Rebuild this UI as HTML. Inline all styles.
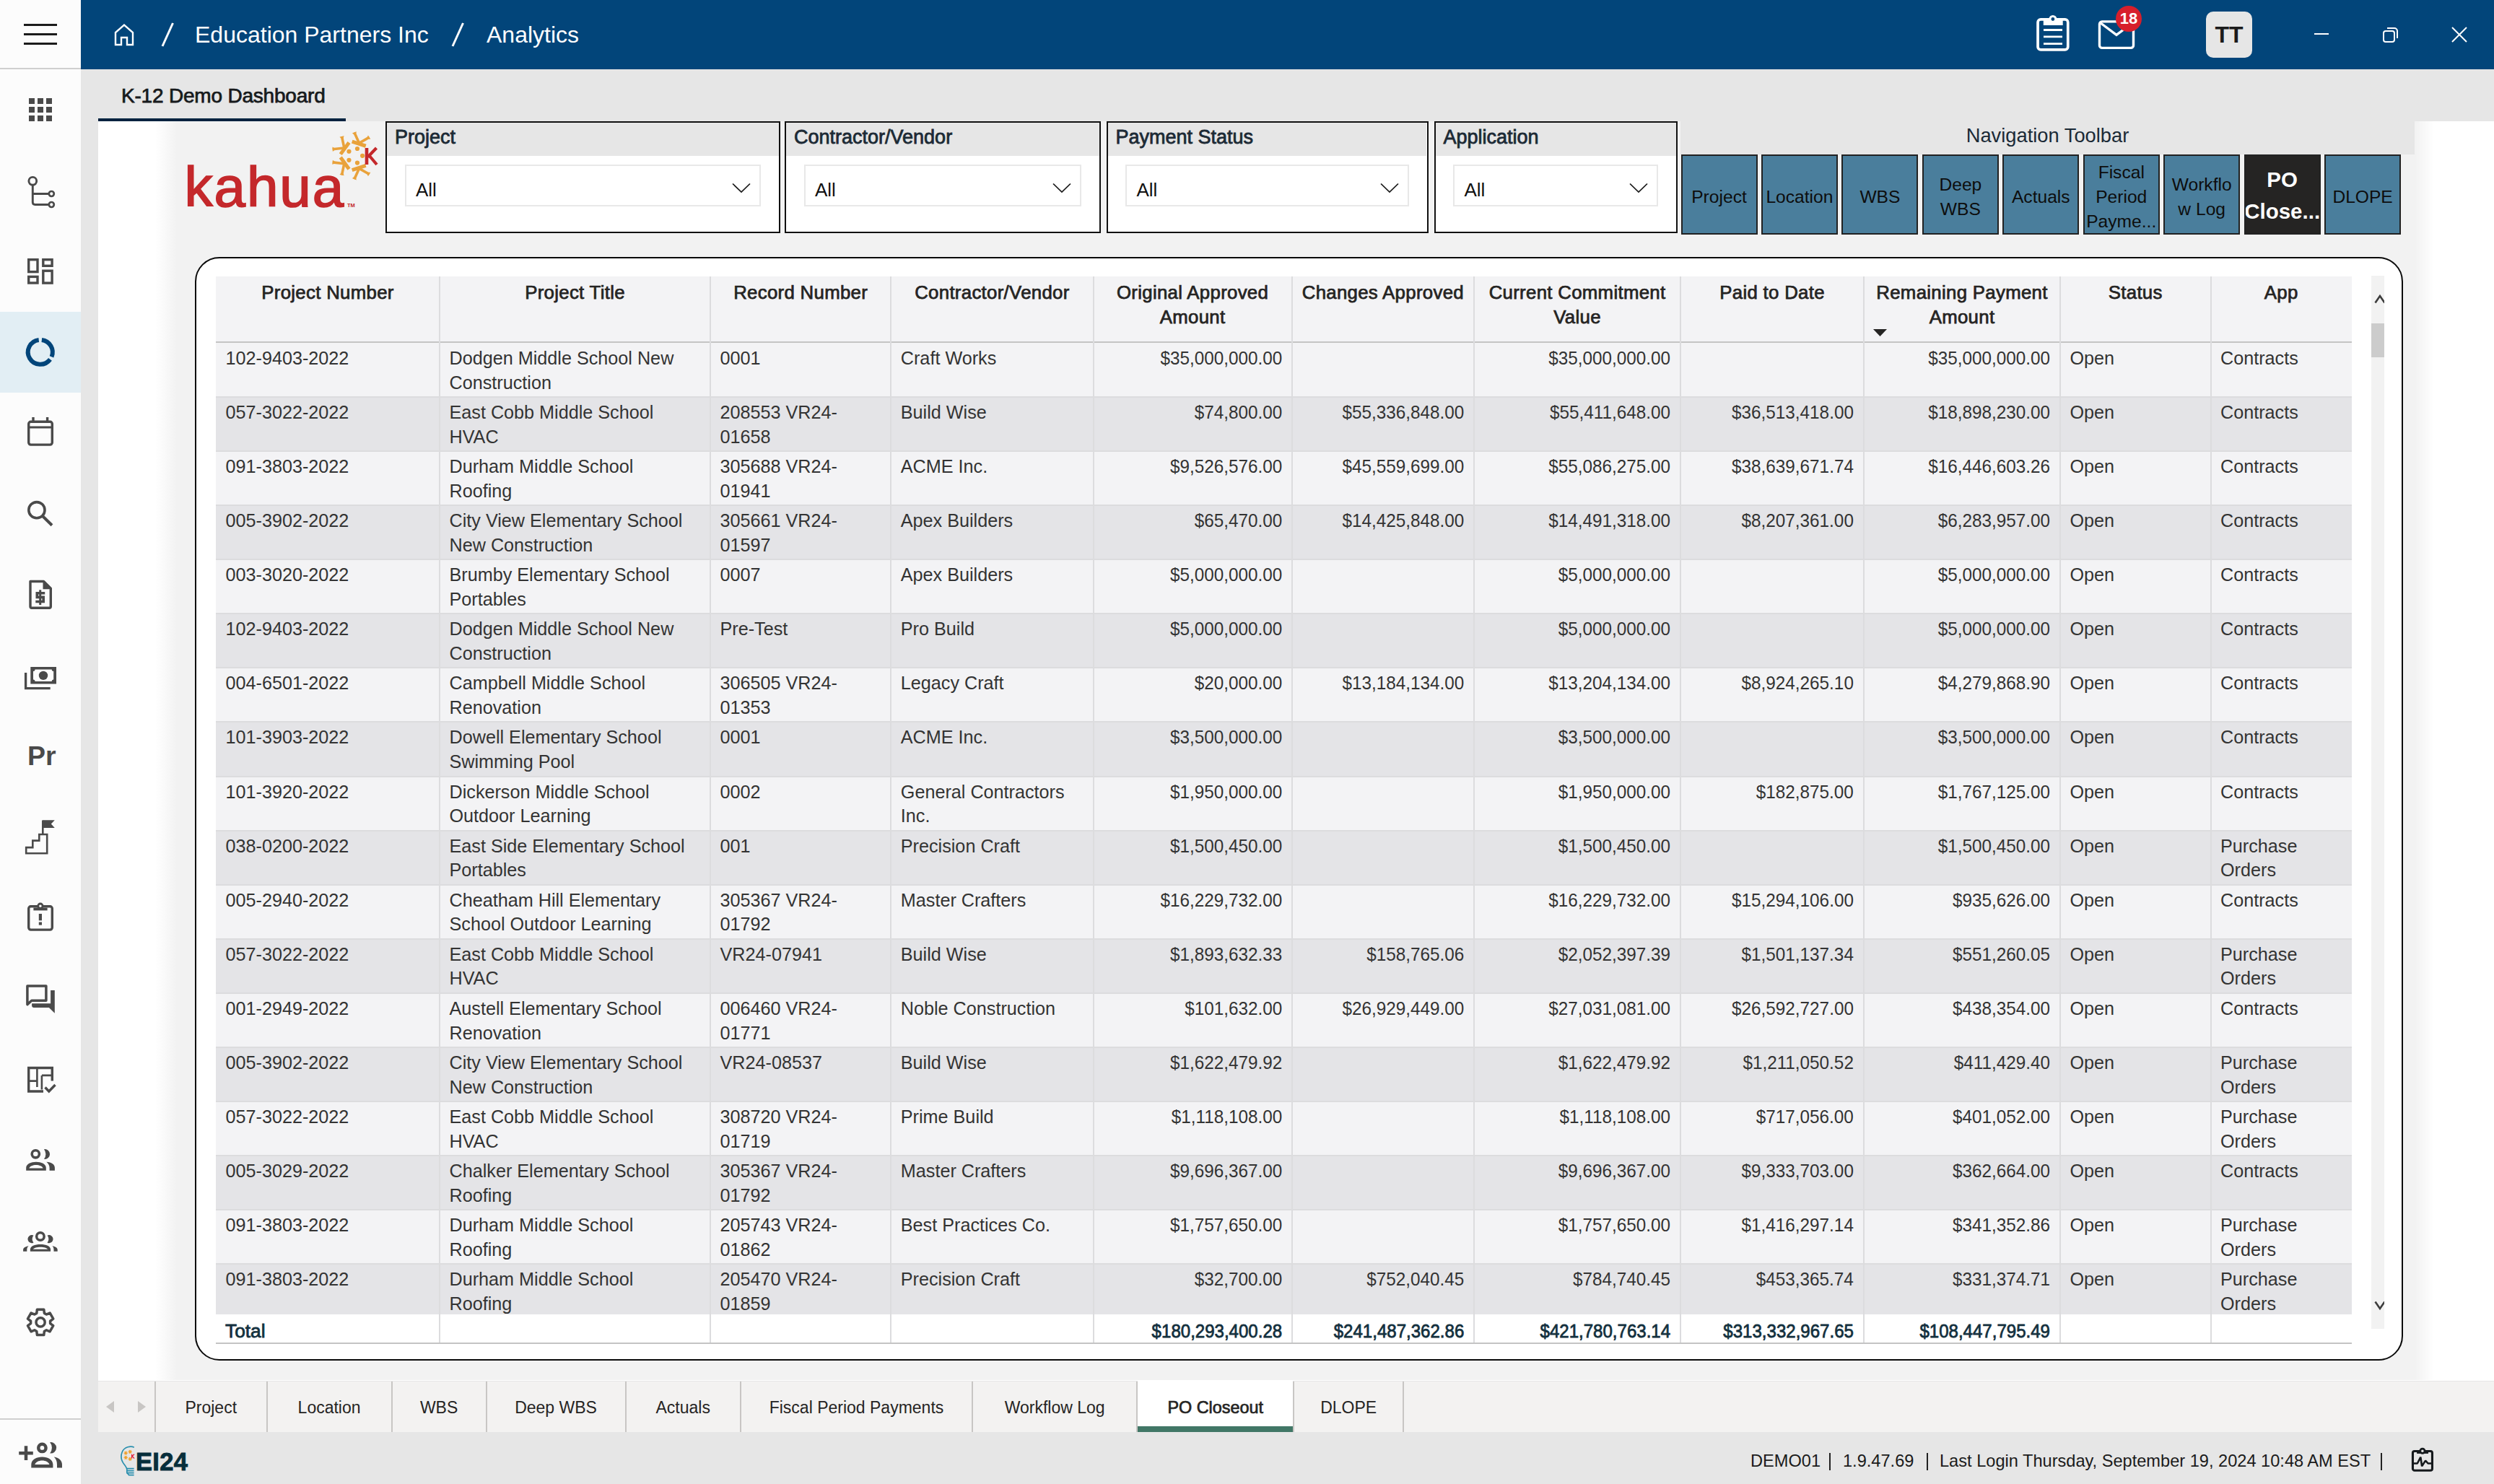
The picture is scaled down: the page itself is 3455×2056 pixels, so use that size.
<!DOCTYPE html>
<html><head><meta charset="utf-8"><title>Analytics</title><style>
html,body{margin:0;padding:0;width:3455px;height:2056px;overflow:hidden;background:#e6e6e6;font-family:'Liberation Sans', sans-serif;}
.a{position:absolute;}
.bc{font:32px/42px 'Liberation Sans', sans-serif;color:#fff;white-space:nowrap;}
.th{font:25.8px/34px 'Liberation Sans', sans-serif;color:#252423;text-align:center;-webkit-text-stroke:0.75px #252423;letter-spacing:0.3px;}
.td{font:25.2px/33.7px 'Liberation Sans', sans-serif;color:#333333;white-space:nowrap;}
.td.r{text-align:right;font-size:25.3px;transform:scaleX(0.96);transform-origin:100% 50%;}
.tt.r{text-align:right;font-size:26px;transform:scaleX(0.925);transform-origin:100% 50%;}
.tt{font:26.3px/34px 'Liberation Sans', sans-serif;color:#13303e;white-space:nowrap;-webkit-text-stroke:0.8px #13303e;}
.sl{font:27px/34px 'Liberation Sans', sans-serif;color:#1c2a35;white-space:nowrap;-webkit-text-stroke:0.8px #1c2a35;}
.all{font:26px/34px 'Liberation Sans', sans-serif;color:#111;}
.nb,.nbd{box-sizing:border-box;border:2.2px solid #222;display:flex;align-items:center;justify-content:center;text-align:center;overflow:hidden;}
.nb span{font:24.6px/34px 'Liberation Sans', sans-serif;padding-top:7px;}
.nbd span{font:bold 29.5px/44px 'Liberation Sans', sans-serif;padding-top:3px;}
.tb{font:23px/32px 'Liberation Sans', sans-serif;color:#252423;text-align:center;white-space:nowrap;}
.tb.b{font-size:23.4px;-webkit-text-stroke:0.7px #252423;}
.ft{font:23.6px/30px 'Liberation Sans', sans-serif;color:#1b1b1b;white-space:nowrap;}
</style></head><body>
<div class="a " style="left:0px;top:0px;width:112px;height:2056px;background:#fcfcfc;"></div>
<div class="a " style="left:0px;top:94px;width:112px;height:2px;background:#cfcfcf;"></div>
<div class="a " style="left:0px;top:1965px;width:112px;height:2px;background:#cfcfcf;"></div>
<div class="a " style="left:0px;top:432px;width:112px;height:112px;background:#e2eef4;"></div>
<div class="a " style="left:112px;top:0px;width:3343px;height:96px;background:#02457a;"></div>
<div class="a " style="left:112px;top:96px;width:3343px;height:1960px;background:#e6e6e6;"></div>
<div class="a " style="left:136px;top:168px;width:3319px;height:1745px;background:#ffffff;"></div>
<div class="a " style="left:215px;top:168px;width:3165px;height:1744px;background:linear-gradient(90deg,#ffffff 0px,#f2f2f2 30px,#f2f2f2 3131px,#ffffff 3157px);"></div>
<div class="a " style="left:136px;top:164px;width:343px;height:4px;background:#00223f;"></div>
<div class="a " style="left:33px;top:33px;width:46px;height:2.6px;background:#1b1b1b;"></div>
<div class="a " style="left:33px;top:46px;width:46px;height:2.6px;background:#1b1b1b;"></div>
<div class="a " style="left:33px;top:59px;width:46px;height:2.6px;background:#1b1b1b;"></div>
<svg class="a" style="left:157px;top:32px" width="30" height="32" viewBox="0 0 30 32"><path d="M3 30V13L15 2.5L27 13V30H19V20H11V30Z" fill="none" stroke="#fff" stroke-width="2.4" stroke-linejoin="miter"/></svg>
<svg class="a" style="left:222px;top:31px" width="20" height="34"><path d="M17.5 1L3 33" stroke="#fff" stroke-width="3"/></svg>
<svg class="a" style="left:624px;top:31px" width="20" height="34"><path d="M17.5 1L3 33" stroke="#fff" stroke-width="3"/></svg>
<div class="a bc" style="left:270px;top:27px;">Education Partners Inc</div>
<div class="a bc" style="left:674px;top:27px;">Analytics</div>
<svg class="a" style="left:2819px;top:19px" width="50" height="54" viewBox="0 0 50 54"><rect x="4.05" y="7.95" width="41.7" height="42" rx="4" fill="none" stroke="#fff" stroke-width="3.7"/><rect x="11.8" y="6.4" width="26.9" height="9.6" fill="#fff"/><circle cx="24.9" cy="7.5" r="5.5" fill="#fff"/><circle cx="24.9" cy="7.5" r="2.4" fill="#02457a"/><path d="M12 22.5H38M12 31.8H38M12 41.6H38" stroke="#fff" stroke-width="2.8"/></svg>
<svg class="a" style="left:2905px;top:26px" width="54" height="44" viewBox="0 0 54 44"><rect x="3.5" y="3.9" width="47" height="36.5" rx="3.5" fill="none" stroke="#fff" stroke-width="3.4"/><path d="M4.5 5.5L27 22.3L49.5 5.5" fill="none" stroke="#fff" stroke-width="3.4"/></svg>
<div class="a" style="left:2930.8px;top:7.8px;width:36.4px;height:36.4px;border-radius:50%;background:#d71f2c;color:#fff;font:bold 22px/36.4px 'Liberation Sans', sans-serif;text-align:center;">18</div>
<div class="a" style="left:3056px;top:16px;width:64px;height:64px;border-radius:10px;background:#e6e6e6;color:#1b1b1b;font:bold 32px/64px 'Liberation Sans', sans-serif;text-align:center;">TT</div>
<div class="a " style="left:3206px;top:46px;width:20px;height:2px;background:#fff;"></div>
<svg class="a" style="left:3300px;top:36px" width="24" height="24"><rect x="2" y="7" width="15" height="15" rx="3" fill="none" stroke="#fff" stroke-width="2"/><path d="M7 3H17a4 4 0 0 1 4 4V17" fill="none" stroke="#fff" stroke-width="2"/></svg>
<svg class="a" style="left:3395px;top:36px" width="24" height="24"><path d="M2 2L22 22M22 2L2 22" stroke="#fff" stroke-width="2"/></svg>
<div class="a" style="left:168px;top:115px;font:28px/36px 'Liberation Sans', sans-serif;color:#171a1c;-webkit-text-stroke:0.75px #171a1c;letter-spacing:-0.2px;">K-12 Demo Dashboard</div>
<svg class="a" style="left:32.0px;top:128.0px;overflow:visible" width="48" height="48" viewBox="0 0 48 48"><rect x="8" y="8" width="8" height="8" fill="#4a4a4a"/><rect x="20" y="8" width="8" height="8" fill="#4a4a4a"/><rect x="32" y="8" width="8" height="8" fill="#4a4a4a"/><rect x="8" y="20" width="8" height="8" fill="#4a4a4a"/><rect x="20" y="20" width="8" height="8" fill="#4a4a4a"/><rect x="32" y="20" width="8" height="8" fill="#4a4a4a"/><rect x="8" y="32" width="8" height="8" fill="#4a4a4a"/><rect x="20" y="32" width="8" height="8" fill="#4a4a4a"/><rect x="32" y="32" width="8" height="8" fill="#4a4a4a"/></svg>
<svg class="a" style="left:32.0px;top:240.0px;overflow:visible" width="48" height="48" viewBox="0 0 48 48"><circle cx="13.3" cy="10.8" r="5.4" fill="none" stroke="#4a4a4a" stroke-width="2.9"/><path d="M13.3 16.2V40.3Q13.3 43.5 16.5 43.5H35.8M13.3 28.5H35.8" fill="none" stroke="#4a4a4a" stroke-width="2.9"/><circle cx="39.3" cy="28.5" r="3.5" fill="none" stroke="#4a4a4a" stroke-width="2.7"/><circle cx="39.3" cy="43.5" r="3.5" fill="none" stroke="#4a4a4a" stroke-width="2.7"/></svg>
<svg class="a" style="left:32.0px;top:352.0px;overflow:visible" width="48" height="48" viewBox="0 0 48 48"><rect x="7.7" y="7.7" width="12.3" height="16.9" fill="none" stroke="#4a4a4a" stroke-width="3.4"/><rect x="27.8" y="7.7" width="12.3" height="8.6" fill="none" stroke="#4a4a4a" stroke-width="3.4"/><rect x="7.7" y="31.4" width="12.3" height="8.6" fill="none" stroke="#4a4a4a" stroke-width="3.4"/><rect x="27.8" y="23.2" width="12.3" height="16.9" fill="none" stroke="#4a4a4a" stroke-width="3.4"/></svg>
<svg class="a" style="left:32.0px;top:464.0px;overflow:visible" width="48" height="48" viewBox="0 0 48 48"><path d="M25.87 6.93A17 17 0 0 1 39.52 30.28" fill="none" stroke="#02457a" stroke-width="6"/><path d="M37.48 33.89A17 17 0 1 1 21.73 6.93" fill="none" stroke="#02457a" stroke-width="6"/></svg>
<svg class="a" style="left:32.0px;top:576.0px;overflow:visible" width="48" height="48" viewBox="0 0 48 48"><rect x="7.7" y="8.2" width="32.6" height="31.9" rx="3" fill="none" stroke="#4a4a4a" stroke-width="3.4"/><path d="M7.7 16H40.3" stroke="#4a4a4a" stroke-width="3"/><path d="M14 2V8M33.6 2V8" stroke="#4a4a4a" stroke-width="3.4"/></svg>
<svg class="a" style="left:32.0px;top:688.0px;overflow:visible" width="48" height="48" viewBox="0 0 48 48"><circle cx="18.9" cy="18.7" r="11.1" fill="none" stroke="#4a4a4a" stroke-width="3.6"/><path d="M26.5 26.5L40 39.7" stroke="#4a4a4a" stroke-width="4"/></svg>
<svg class="a" style="left:32.0px;top:800.0px;overflow:visible" width="48" height="48" viewBox="0 0 48 48"><path d="M10 5.5H28.5L38.3 15.3V40.2a2 2 0 0 1-2 2H12a2 2 0 0 1-2-2Z" fill="none" stroke="#4a4a4a" stroke-width="3.4" stroke-linejoin="round"/><path d="M27.5 4.5V16.3H39.3Z" fill="#4a4a4a"/><path d="M23.7 17.3V38" stroke="#4a4a4a" stroke-width="3"/><path d="M30.2 21.7H19.3V27.4H28.2V33.5H17.3" fill="none" stroke="#4a4a4a" stroke-width="3.6"/></svg>
<svg class="a" style="left:32.0px;top:912.0px;overflow:visible" width="48" height="48" viewBox="0 0 48 48"><path d="M10.3 12H46V35.4H10.3Z M16.5 15.5A2.5 2.5 0 0 1 14 18V29.5A2.5 2.5 0 0 1 16.5 32H39.7A2.5 2.5 0 0 1 42.2 29.5V18A2.5 2.5 0 0 1 39.7 15.5Z" fill="#4a4a4a" fill-rule="evenodd"/><circle cx="28" cy="23.9" r="6.2" fill="#4a4a4a"/><path d="M3.6 20V41.7H37.7" fill="none" stroke="#4a4a4a" stroke-width="3.3"/></svg>
<div class="a" style="left:38px;top:1026px;font:bold 37.5px/42px 'Liberation Sans', sans-serif;color:#4a4a4a;">Pr</div>
<svg class="a" style="left:32.0px;top:1136.0px;overflow:visible" width="48" height="48" viewBox="0 0 48 48"><path d="M4.2 46.2V38.1H13.3V28.6H22.3V20H33.2V46.2Z" fill="none" stroke="#4a4a4a" stroke-width="2.6"/><path d="M27.3 20V0.5" stroke="#4a4a4a" stroke-width="2.6"/><path d="M27.5 0.3H43.8L38.8 5.6L43.8 11H27.5Z" fill="#4a4a4a"/></svg>
<svg class="a" style="left:32.0px;top:1248.0px;overflow:visible" width="48" height="48" viewBox="0 0 48 48"><rect x="7.7" y="7.7" width="32.6" height="32.4" rx="3" fill="none" stroke="#4a4a4a" stroke-width="3.4"/><rect x="14.4" y="9.6" width="19.2" height="3.8" fill="#4a4a4a"/><circle cx="23.9" cy="7.2" r="3.2" fill="#fcfcfc" stroke="#4a4a4a" stroke-width="2.8"/><rect x="21.8" y="18" width="4.2" height="9.3" fill="#4a4a4a"/><rect x="21.8" y="29.5" width="4.2" height="4.1" fill="#4a4a4a"/></svg>
<svg class="a" style="left:32.0px;top:1360.0px;overflow:visible" width="48" height="48" viewBox="0 0 48 48"><path d="M5.9 5.9H31.9V26.3H11.8L5.9 31.6Z" fill="none" stroke="#4a4a4a" stroke-width="3.5" stroke-linejoin="round"/><path d="M38.1 12H43.8V43.8L35.9 35.9H14.5Q12.1 35.9 12.1 33.5V30.2H38.1Z" fill="#4a4a4a"/></svg>
<svg class="a" style="left:32.0px;top:1472.0px;overflow:visible" width="48" height="48" viewBox="0 0 48 48"><path d="M7.7 41.7V7.5H40.3V25.5M6 40H28" fill="none" stroke="#4a4a4a" stroke-width="3.4"/><path d="M19.4 7.5V34M7.7 25.6H20M25.9 17.9V37.5M25.9 17.9H39" fill="none" stroke="#4a4a4a" stroke-width="2.6"/><path d="M30.5 34.5L35.8 40L44.5 31" fill="none" stroke="#4a4a4a" stroke-width="3.4"/></svg>
<svg class="a" style="left:32.0px;top:1584.0px;overflow:visible" width="48" height="48" viewBox="0 0 48 48"><circle cx="17.3" cy="14.8" r="5.1" fill="none" stroke="#4a4a4a" stroke-width="3.6"/><path d="M29 8.2A6.9 6.9 0 1 1 29 21.8A11 11 0 0 0 29 8.2Z" fill="#4a4a4a"/><path d="M4.2 37.7V34C4.2 28.5 11 25.7 18 25.7C25 25.7 31.8 28.5 31.8 34V37.7Z M8.4 34.4C9.5 31.6 13.5 30 18 30C22.5 30 26.5 31.6 27.6 34.4Z" fill="#4a4a4a" fill-rule="evenodd"/><path d="M32.4 25.7C39.2 26.2 43.9 29 43.9 34V37.7H36.6V34C36.6 30.6 35 27.8 32.4 25.7Z" fill="#4a4a4a"/></svg>
<svg class="a" style="left:32.0px;top:1696.0px;overflow:visible" width="48" height="48" viewBox="0 0 48 48"><circle cx="23.9" cy="17" r="5.25" fill="none" stroke="#4a4a4a" stroke-width="3.5"/><path d="M14.4 15.5A5.6 5.6 0 1 0 14.4 25.7A9 9 0 0 1 14.4 15.5Z" fill="#4a4a4a"/><path d="M33.6 15.5A5.6 5.6 0 1 1 33.6 25.7A9 9 0 0 0 33.6 15.5Z" fill="#4a4a4a"/><path d="M9.9 37.7V35C9.9 30.5 16 28 24 28C32 28 38.1 30.5 38.1 35V37.7Z M14 34.8C15 32.8 19 31.8 24 31.8C29 31.8 33 32.8 34 34.8Z" fill="#4a4a4a" fill-rule="evenodd"/><path d="M7.6 30.2C3.5 31 0.1 32.5 0.1 35.5V37.7H5.3V35.5C5.3 33.2 6.1 31.6 7.6 30.2Z" fill="#4a4a4a"/><path d="M40.4 30.2C44.5 31 47.7 32.5 47.7 35.5V37.7H42.5V35.5C42.5 33.2 41.9 31.6 40.4 30.2Z" fill="#4a4a4a"/></svg>
<svg class="a" style="left:32.0px;top:1808.0px;overflow:visible" width="48" height="48" viewBox="0 0 48 48"><polygon points="19.40,6.22 28.80,6.22 29.40,11.37 32.30,13.05 37.06,10.98 41.77,19.13 37.60,22.22 37.60,25.58 41.77,28.67 37.06,36.82 32.30,34.75 29.40,36.43 28.80,41.58 19.40,41.58 18.80,36.43 15.90,34.75 11.14,36.82 6.43,28.67 10.60,25.58 10.60,22.22 6.43,19.13 11.14,10.98 15.90,13.05 18.80,11.37" fill="none" stroke="#4a4a4a" stroke-width="3.5" stroke-linejoin="round"/><circle cx="24.1" cy="23.9" r="6.1" fill="none" stroke="#4a4a4a" stroke-width="3.5"/></svg>
<svg class="a" style="left:24.0px;top:1984.0px;overflow:visible" width="64" height="64" viewBox="0 0 64 64"><path d="M2.2 29.2H21.8M12 19.2V39" stroke="#4a4a4a" stroke-width="4.5"/><circle cx="34.4" cy="21.9" r="5.15" fill="none" stroke="#4a4a4a" stroke-width="4.5"/><path d="M45.2 14.2A7.7 7.7 0 1 1 45.2 29.4A12 12 0 0 0 45.2 14.2Z" fill="#4a4a4a"/><path d="M19.3 49.4V45C19.3 38.5 26.5 34.5 34.4 34.5C42.3 34.5 49.4 38.5 49.4 45V49.4Z M24.3 44.9C25.5 41.5 29.5 39.4 34.4 39.4C39.3 39.4 43.3 41.5 44.5 44.9Z" fill="#4a4a4a" fill-rule="evenodd"/><path d="M50.7 34.5C57.5 35.5 62 39.5 62 45V49.4H55V45C55 40.5 53.5 37 50.7 34.5Z" fill="#4a4a4a"/></svg>
<div class="a " style="left:534px;top:168px;width:547px;height:155px;background:#fff;border:2.4px solid #111;box-sizing:border-box;"></div>
<div class="a " style="left:536.4px;top:170.4px;width:542.2px;height:46px;background:#e6e6e6;"></div>
<div class="a sl" style="left:547px;top:173px;">Project</div>
<div class="a " style="left:560.5px;top:228.3px;width:493.5px;height:58.2px;border:2.2px solid #e8e8e8;box-sizing:border-box;background:#fff;"></div>
<div class="a all" style="left:576px;top:246px;">All</div>
<svg class="a" style="left:1014px;top:252.5px" width="26" height="15"><path d="M1 1.5L13 13L25 1.5" fill="none" stroke="#1a1a1a" stroke-width="1.7"/></svg>
<div class="a " style="left:1087px;top:168px;width:438px;height:155px;background:#fff;border:2.4px solid #111;box-sizing:border-box;"></div>
<div class="a " style="left:1089.4px;top:170.4px;width:433.2px;height:46px;background:#e6e6e6;"></div>
<div class="a sl" style="left:1100px;top:173px;">Contractor/Vendor</div>
<div class="a " style="left:1113.5px;top:228.3px;width:384.5px;height:58.2px;border:2.2px solid #e8e8e8;box-sizing:border-box;background:#fff;"></div>
<div class="a all" style="left:1129px;top:246px;">All</div>
<svg class="a" style="left:1458px;top:252.5px" width="26" height="15"><path d="M1 1.5L13 13L25 1.5" fill="none" stroke="#1a1a1a" stroke-width="1.7"/></svg>
<div class="a " style="left:1532.5px;top:168px;width:446.0px;height:155px;background:#fff;border:2.4px solid #111;box-sizing:border-box;"></div>
<div class="a " style="left:1534.9px;top:170.4px;width:441.2px;height:46px;background:#e6e6e6;"></div>
<div class="a sl" style="left:1545.5px;top:173px;">Payment Status</div>
<div class="a " style="left:1559.0px;top:228.3px;width:392.5px;height:58.2px;border:2.2px solid #e8e8e8;box-sizing:border-box;background:#fff;"></div>
<div class="a all" style="left:1574.5px;top:246px;">All</div>
<svg class="a" style="left:1911.5px;top:252.5px" width="26" height="15"><path d="M1 1.5L13 13L25 1.5" fill="none" stroke="#1a1a1a" stroke-width="1.7"/></svg>
<div class="a " style="left:1986.5px;top:168px;width:337.5px;height:155px;background:#fff;border:2.4px solid #111;box-sizing:border-box;"></div>
<div class="a " style="left:1988.9px;top:170.4px;width:332.7px;height:46px;background:#e6e6e6;"></div>
<div class="a sl" style="left:1999.5px;top:173px;">Application</div>
<div class="a " style="left:2013.0px;top:228.3px;width:284.0px;height:58.2px;border:2.2px solid #e8e8e8;box-sizing:border-box;background:#fff;"></div>
<div class="a all" style="left:2028.5px;top:246px;">All</div>
<svg class="a" style="left:2257px;top:252.5px" width="26" height="15"><path d="M1 1.5L13 13L25 1.5" fill="none" stroke="#1a1a1a" stroke-width="1.7"/></svg>
<div class="a " style="left:2328px;top:168px;width:1017px;height:46px;background:#e6e6e6;"></div>
<div class="a" style="left:2328px;top:171px;width:1017px;text-align:center;font:27.3px/34px 'Liberation Sans', sans-serif;color:#1b2a36;">Navigation Toolbar</div>
<div class="a nb" style="left:2328.5px;top:214px;width:106px;height:111px;background:#4a7e9c;color:#0d0d0d;"><span>Project</span></div>
<div class="a nb" style="left:2439.95px;top:214px;width:106px;height:111px;background:#4a7e9c;color:#0d0d0d;"><span>Location</span></div>
<div class="a nb" style="left:2551.4px;top:214px;width:106px;height:111px;background:#4a7e9c;color:#0d0d0d;"><span>WBS</span></div>
<div class="a nb" style="left:2662.85px;top:214px;width:106px;height:111px;background:#4a7e9c;color:#0d0d0d;"><span>Deep<br>WBS</span></div>
<div class="a nb" style="left:2774.3px;top:214px;width:106px;height:111px;background:#4a7e9c;color:#0d0d0d;"><span>Actuals</span></div>
<div class="a nb" style="left:2885.75px;top:214px;width:106px;height:111px;background:#4a7e9c;color:#0d0d0d;"><span>Fiscal<br>Period<br>Payme...</span></div>
<div class="a nb" style="left:2997.2px;top:214px;width:106px;height:111px;background:#4a7e9c;color:#0d0d0d;"><span>Workflo<br>w Log</span></div>
<div class="a nbd" style="left:3108.65px;top:214px;width:106px;height:111px;background:#252423;color:#fff;"><span>PO<br>Close...</span></div>
<div class="a nb" style="left:3220.1px;top:214px;width:106px;height:111px;background:#4a7e9c;color:#0d0d0d;"><span>DLOPE</span></div>
<div class="a" style="left:255.5px;top:214px;font:78.2px/90px 'Liberation Sans', sans-serif;color:#c4282b;letter-spacing:1.9px;-webkit-text-stroke:1.7px #c4282b;">kahua</div>
<div class="a" style="left:481px;top:281px;font:bold 7.5px/8px 'Liberation Sans', sans-serif;color:#c4282b;">TM</div>
<svg class="a" style="left:440px;top:160px" width="100" height="100" viewBox="440 160 100 100"><circle cx="502.10" cy="215.80" r="3.1" fill="#e9a23b"/><circle cx="494.98" cy="225.60" r="3.1" fill="#e9a23b"/><path d="M506.72 229.35L487.70 235.53" stroke="#e9a23b" stroke-width="5"/><path d="M497.52 233.39L511.62 241.45" stroke="#e9a23b" stroke-width="3.6"/><path d="M513.32 238.74L509.93 244.17L507.38 238.80Z" fill="#e9a23b"/><path d="M497.52 233.39L490.84 248.21" stroke="#e9a23b" stroke-width="3.6"/><path d="M493.81 249.40L487.87 247.01L492.71 243.57Z" fill="#e9a23b"/><circle cx="483.47" cy="221.85" r="3.1" fill="#e9a23b"/><path d="M483.52 234.18L471.76 218.00" stroke="#e9a23b" stroke-width="5"/><path d="M476.83 226.67L473.53 242.58" stroke="#e9a23b" stroke-width="3.6"/><path d="M476.63 243.36L470.42 241.81L474.74 237.73Z" fill="#e9a23b"/><path d="M476.83 226.67L460.68 224.90" stroke="#e9a23b" stroke-width="3.6"/><path d="M460.46 228.09L460.91 221.71L465.67 225.25Z" fill="#e9a23b"/><circle cx="483.47" cy="209.75" r="3.1" fill="#e9a23b"/><path d="M471.76 213.60L483.52 197.42" stroke="#e9a23b" stroke-width="5"/><path d="M476.83 204.93L460.68 206.70" stroke="#e9a23b" stroke-width="3.6"/><path d="M460.91 209.89L460.46 203.51L465.67 206.35Z" fill="#e9a23b"/><path d="M476.83 204.93L473.53 189.02" stroke="#e9a23b" stroke-width="3.6"/><path d="M470.42 189.79L476.63 188.24L474.74 193.87Z" fill="#e9a23b"/><circle cx="494.98" cy="206.00" r="3.1" fill="#e9a23b"/><path d="M487.70 196.07L506.72 202.25" stroke="#e9a23b" stroke-width="5"/><path d="M497.52 198.21L490.84 183.39" stroke="#e9a23b" stroke-width="3.6"/><path d="M487.87 184.59L493.81 182.20L492.71 188.03Z" fill="#e9a23b"/><path d="M497.52 198.21L511.62 190.15" stroke="#e9a23b" stroke-width="3.6"/><path d="M509.93 187.43L513.32 192.86L507.38 192.80Z" fill="#e9a23b"/><path d="M508 205V228" stroke="#c4282b" stroke-width="4.6"/><path d="M509.5 217.5L521.5 205M511 215L522 228" stroke="#c4282b" stroke-width="4.2"/></svg>
<div class="a " style="left:270px;top:356px;width:3059px;height:1528.5px;border:2.7px solid #0a0a0a;border-radius:34px;background:#fff;box-sizing:border-box;"></div>
<div class="a " style="left:299px;top:383px;width:2959px;height:90px;background:#f3f3f5;"></div>
<div class="a " style="left:299px;top:473px;width:2959px;height:2px;background:#c4c4c4;"></div>
<div class="a " style="left:299px;top:475.0px;width:2959px;height:75.07px;background:#f3f3f5;"></div>
<div class="a " style="left:299px;top:550.0699999999999px;width:2959px;height:75.07px;background:#e4e4e7;"></div>
<div class="a " style="left:299px;top:549.0699999999999px;width:2959px;height:2px;background:#dcdcde;"></div>
<div class="a " style="left:299px;top:625.14px;width:2959px;height:75.07px;background:#f3f3f5;"></div>
<div class="a " style="left:299px;top:624.14px;width:2959px;height:2px;background:#dcdcde;"></div>
<div class="a " style="left:299px;top:700.21px;width:2959px;height:75.07px;background:#e4e4e7;"></div>
<div class="a " style="left:299px;top:699.21px;width:2959px;height:2px;background:#dcdcde;"></div>
<div class="a " style="left:299px;top:775.28px;width:2959px;height:75.07px;background:#f3f3f5;"></div>
<div class="a " style="left:299px;top:774.28px;width:2959px;height:2px;background:#dcdcde;"></div>
<div class="a " style="left:299px;top:850.3499999999999px;width:2959px;height:75.07px;background:#e4e4e7;"></div>
<div class="a " style="left:299px;top:849.3499999999999px;width:2959px;height:2px;background:#dcdcde;"></div>
<div class="a " style="left:299px;top:925.42px;width:2959px;height:75.07px;background:#f3f3f5;"></div>
<div class="a " style="left:299px;top:924.42px;width:2959px;height:2px;background:#dcdcde;"></div>
<div class="a " style="left:299px;top:1000.49px;width:2959px;height:75.07px;background:#e4e4e7;"></div>
<div class="a " style="left:299px;top:999.49px;width:2959px;height:2px;background:#dcdcde;"></div>
<div class="a " style="left:299px;top:1075.56px;width:2959px;height:75.07px;background:#f3f3f5;"></div>
<div class="a " style="left:299px;top:1074.56px;width:2959px;height:2px;background:#dcdcde;"></div>
<div class="a " style="left:299px;top:1150.6299999999999px;width:2959px;height:75.07px;background:#e4e4e7;"></div>
<div class="a " style="left:299px;top:1149.6299999999999px;width:2959px;height:2px;background:#dcdcde;"></div>
<div class="a " style="left:299px;top:1225.6999999999998px;width:2959px;height:75.07px;background:#f3f3f5;"></div>
<div class="a " style="left:299px;top:1224.6999999999998px;width:2959px;height:2px;background:#dcdcde;"></div>
<div class="a " style="left:299px;top:1300.77px;width:2959px;height:75.07px;background:#e4e4e7;"></div>
<div class="a " style="left:299px;top:1299.77px;width:2959px;height:2px;background:#dcdcde;"></div>
<div class="a " style="left:299px;top:1375.84px;width:2959px;height:75.07px;background:#f3f3f5;"></div>
<div class="a " style="left:299px;top:1374.84px;width:2959px;height:2px;background:#dcdcde;"></div>
<div class="a " style="left:299px;top:1450.9099999999999px;width:2959px;height:75.07px;background:#e4e4e7;"></div>
<div class="a " style="left:299px;top:1449.9099999999999px;width:2959px;height:2px;background:#dcdcde;"></div>
<div class="a " style="left:299px;top:1525.98px;width:2959px;height:75.07px;background:#f3f3f5;"></div>
<div class="a " style="left:299px;top:1524.98px;width:2959px;height:2px;background:#dcdcde;"></div>
<div class="a " style="left:299px;top:1601.05px;width:2959px;height:75.07px;background:#e4e4e7;"></div>
<div class="a " style="left:299px;top:1600.05px;width:2959px;height:2px;background:#dcdcde;"></div>
<div class="a " style="left:299px;top:1676.12px;width:2959px;height:75.07px;background:#f3f3f5;"></div>
<div class="a " style="left:299px;top:1675.12px;width:2959px;height:2px;background:#dcdcde;"></div>
<div class="a " style="left:299px;top:1751.1899999999998px;width:2959px;height:69.81000000000017px;background:#e4e4e7;"></div>
<div class="a " style="left:299px;top:1750.1899999999998px;width:2959px;height:2px;background:#dcdcde;"></div>
<div class="a " style="left:299px;top:1860px;width:2959px;height:2px;background:#c4c4c4;"></div>
<div class="a " style="left:608px;top:383px;width:2px;height:1477px;background:#dcdcde;"></div>
<div class="a " style="left:983px;top:383px;width:2px;height:1477px;background:#dcdcde;"></div>
<div class="a " style="left:1233.3px;top:383px;width:2px;height:1477px;background:#dcdcde;"></div>
<div class="a " style="left:1513.5px;top:383px;width:2px;height:1477px;background:#dcdcde;"></div>
<div class="a " style="left:1788.7px;top:383px;width:2px;height:1477px;background:#dcdcde;"></div>
<div class="a " style="left:2041px;top:383px;width:2px;height:1477px;background:#dcdcde;"></div>
<div class="a " style="left:2327.1px;top:383px;width:2px;height:1477px;background:#dcdcde;"></div>
<div class="a " style="left:2581px;top:383px;width:2px;height:1477px;background:#dcdcde;"></div>
<div class="a " style="left:2853px;top:383px;width:2px;height:1477px;background:#dcdcde;"></div>
<div class="a " style="left:3061.5px;top:383px;width:2px;height:1477px;background:#dcdcde;"></div>
<div class="a th" style="left:299px;top:388px;width:310px;">Project Number</div>
<div class="a th" style="left:609px;top:388px;width:375px;">Project Title</div>
<div class="a th" style="left:984px;top:388px;width:250.29999999999995px;">Record Number</div>
<div class="a th" style="left:1234.3px;top:388px;width:280.20000000000005px;">Contractor/Vendor</div>
<div class="a th" style="left:1514.5px;top:388px;width:275.20000000000005px;">Original Approved<br>Amount</div>
<div class="a th" style="left:1789.7px;top:388px;width:252.29999999999995px;">Changes Approved</div>
<div class="a th" style="left:2042px;top:388px;width:286.0999999999999px;">Current Commitment<br>Value</div>
<div class="a th" style="left:2328.1px;top:388px;width:253.9000000000001px;">Paid to Date</div>
<div class="a th" style="left:2582px;top:388px;width:272px;">Remaining Payment<br>Amount</div>
<div class="a th" style="left:2854px;top:388px;width:208.5px;">Status</div>
<div class="a th" style="left:3062.5px;top:388px;width:195.5px;">App</div>
<svg class="a" style="left:2595px;top:456px" width="19" height="10"><path d="M0 0H19L9.5 10Z" fill="#252423"/></svg>
<div class="a td" style="left:312.5px;top:480.0px;width:297px;">102-9403-2022</div>
<div class="a td" style="left:622.5px;top:480.0px;width:362px;">Dodgen Middle School New<br>Construction</div>
<div class="a td" style="left:997.5px;top:480.0px;width:237.29999999999995px;">0001</div>
<div class="a td" style="left:1247.8px;top:480.0px;width:267.20000000000005px;">Craft Works</div>
<div class="a td r" style="left:1514.5px;top:480.0px;width:261.20000000000005px;">$35,000,000.00</div>
<div class="a td r" style="left:2042px;top:480.0px;width:272.0999999999999px;">$35,000,000.00</div>
<div class="a td r" style="left:2582px;top:480.0px;width:258px;">$35,000,000.00</div>
<div class="a td" style="left:2867.5px;top:480.0px;width:195.5px;">Open</div>
<div class="a td" style="left:3076.0px;top:480.0px;width:182.5px;">Contracts</div>
<div class="a td" style="left:312.5px;top:555.0699999999999px;width:297px;">057-3022-2022</div>
<div class="a td" style="left:622.5px;top:555.0699999999999px;width:362px;">East Cobb Middle School<br>HVAC</div>
<div class="a td" style="left:997.5px;top:555.0699999999999px;width:237.29999999999995px;">208553 VR24-<br>01658</div>
<div class="a td" style="left:1247.8px;top:555.0699999999999px;width:267.20000000000005px;">Build Wise</div>
<div class="a td r" style="left:1514.5px;top:555.0699999999999px;width:261.20000000000005px;">$74,800.00</div>
<div class="a td r" style="left:1789.7px;top:555.0699999999999px;width:238.29999999999995px;">$55,336,848.00</div>
<div class="a td r" style="left:2042px;top:555.0699999999999px;width:272.0999999999999px;">$55,411,648.00</div>
<div class="a td r" style="left:2328.1px;top:555.0699999999999px;width:239.9000000000001px;">$36,513,418.00</div>
<div class="a td r" style="left:2582px;top:555.0699999999999px;width:258px;">$18,898,230.00</div>
<div class="a td" style="left:2867.5px;top:555.0699999999999px;width:195.5px;">Open</div>
<div class="a td" style="left:3076.0px;top:555.0699999999999px;width:182.5px;">Contracts</div>
<div class="a td" style="left:312.5px;top:630.14px;width:297px;">091-3803-2022</div>
<div class="a td" style="left:622.5px;top:630.14px;width:362px;">Durham Middle School<br>Roofing</div>
<div class="a td" style="left:997.5px;top:630.14px;width:237.29999999999995px;">305688 VR24-<br>01941</div>
<div class="a td" style="left:1247.8px;top:630.14px;width:267.20000000000005px;">ACME Inc.</div>
<div class="a td r" style="left:1514.5px;top:630.14px;width:261.20000000000005px;">$9,526,576.00</div>
<div class="a td r" style="left:1789.7px;top:630.14px;width:238.29999999999995px;">$45,559,699.00</div>
<div class="a td r" style="left:2042px;top:630.14px;width:272.0999999999999px;">$55,086,275.00</div>
<div class="a td r" style="left:2328.1px;top:630.14px;width:239.9000000000001px;">$38,639,671.74</div>
<div class="a td r" style="left:2582px;top:630.14px;width:258px;">$16,446,603.26</div>
<div class="a td" style="left:2867.5px;top:630.14px;width:195.5px;">Open</div>
<div class="a td" style="left:3076.0px;top:630.14px;width:182.5px;">Contracts</div>
<div class="a td" style="left:312.5px;top:705.21px;width:297px;">005-3902-2022</div>
<div class="a td" style="left:622.5px;top:705.21px;width:362px;">City View Elementary School<br>New Construction</div>
<div class="a td" style="left:997.5px;top:705.21px;width:237.29999999999995px;">305661 VR24-<br>01597</div>
<div class="a td" style="left:1247.8px;top:705.21px;width:267.20000000000005px;">Apex Builders</div>
<div class="a td r" style="left:1514.5px;top:705.21px;width:261.20000000000005px;">$65,470.00</div>
<div class="a td r" style="left:1789.7px;top:705.21px;width:238.29999999999995px;">$14,425,848.00</div>
<div class="a td r" style="left:2042px;top:705.21px;width:272.0999999999999px;">$14,491,318.00</div>
<div class="a td r" style="left:2328.1px;top:705.21px;width:239.9000000000001px;">$8,207,361.00</div>
<div class="a td r" style="left:2582px;top:705.21px;width:258px;">$6,283,957.00</div>
<div class="a td" style="left:2867.5px;top:705.21px;width:195.5px;">Open</div>
<div class="a td" style="left:3076.0px;top:705.21px;width:182.5px;">Contracts</div>
<div class="a td" style="left:312.5px;top:780.28px;width:297px;">003-3020-2022</div>
<div class="a td" style="left:622.5px;top:780.28px;width:362px;">Brumby Elementary School<br>Portables</div>
<div class="a td" style="left:997.5px;top:780.28px;width:237.29999999999995px;">0007</div>
<div class="a td" style="left:1247.8px;top:780.28px;width:267.20000000000005px;">Apex Builders</div>
<div class="a td r" style="left:1514.5px;top:780.28px;width:261.20000000000005px;">$5,000,000.00</div>
<div class="a td r" style="left:2042px;top:780.28px;width:272.0999999999999px;">$5,000,000.00</div>
<div class="a td r" style="left:2582px;top:780.28px;width:258px;">$5,000,000.00</div>
<div class="a td" style="left:2867.5px;top:780.28px;width:195.5px;">Open</div>
<div class="a td" style="left:3076.0px;top:780.28px;width:182.5px;">Contracts</div>
<div class="a td" style="left:312.5px;top:855.3499999999999px;width:297px;">102-9403-2022</div>
<div class="a td" style="left:622.5px;top:855.3499999999999px;width:362px;">Dodgen Middle School New<br>Construction</div>
<div class="a td" style="left:997.5px;top:855.3499999999999px;width:237.29999999999995px;">Pre-Test</div>
<div class="a td" style="left:1247.8px;top:855.3499999999999px;width:267.20000000000005px;">Pro Build</div>
<div class="a td r" style="left:1514.5px;top:855.3499999999999px;width:261.20000000000005px;">$5,000,000.00</div>
<div class="a td r" style="left:2042px;top:855.3499999999999px;width:272.0999999999999px;">$5,000,000.00</div>
<div class="a td r" style="left:2582px;top:855.3499999999999px;width:258px;">$5,000,000.00</div>
<div class="a td" style="left:2867.5px;top:855.3499999999999px;width:195.5px;">Open</div>
<div class="a td" style="left:3076.0px;top:855.3499999999999px;width:182.5px;">Contracts</div>
<div class="a td" style="left:312.5px;top:930.42px;width:297px;">004-6501-2022</div>
<div class="a td" style="left:622.5px;top:930.42px;width:362px;">Campbell Middle School<br>Renovation</div>
<div class="a td" style="left:997.5px;top:930.42px;width:237.29999999999995px;">306505 VR24-<br>01353</div>
<div class="a td" style="left:1247.8px;top:930.42px;width:267.20000000000005px;">Legacy Craft</div>
<div class="a td r" style="left:1514.5px;top:930.42px;width:261.20000000000005px;">$20,000.00</div>
<div class="a td r" style="left:1789.7px;top:930.42px;width:238.29999999999995px;">$13,184,134.00</div>
<div class="a td r" style="left:2042px;top:930.42px;width:272.0999999999999px;">$13,204,134.00</div>
<div class="a td r" style="left:2328.1px;top:930.42px;width:239.9000000000001px;">$8,924,265.10</div>
<div class="a td r" style="left:2582px;top:930.42px;width:258px;">$4,279,868.90</div>
<div class="a td" style="left:2867.5px;top:930.42px;width:195.5px;">Open</div>
<div class="a td" style="left:3076.0px;top:930.42px;width:182.5px;">Contracts</div>
<div class="a td" style="left:312.5px;top:1005.49px;width:297px;">101-3903-2022</div>
<div class="a td" style="left:622.5px;top:1005.49px;width:362px;">Dowell Elementary School<br>Swimming Pool</div>
<div class="a td" style="left:997.5px;top:1005.49px;width:237.29999999999995px;">0001</div>
<div class="a td" style="left:1247.8px;top:1005.49px;width:267.20000000000005px;">ACME Inc.</div>
<div class="a td r" style="left:1514.5px;top:1005.49px;width:261.20000000000005px;">$3,500,000.00</div>
<div class="a td r" style="left:2042px;top:1005.49px;width:272.0999999999999px;">$3,500,000.00</div>
<div class="a td r" style="left:2582px;top:1005.49px;width:258px;">$3,500,000.00</div>
<div class="a td" style="left:2867.5px;top:1005.49px;width:195.5px;">Open</div>
<div class="a td" style="left:3076.0px;top:1005.49px;width:182.5px;">Contracts</div>
<div class="a td" style="left:312.5px;top:1080.56px;width:297px;">101-3920-2022</div>
<div class="a td" style="left:622.5px;top:1080.56px;width:362px;">Dickerson Middle School<br>Outdoor Learning</div>
<div class="a td" style="left:997.5px;top:1080.56px;width:237.29999999999995px;">0002</div>
<div class="a td" style="left:1247.8px;top:1080.56px;width:267.20000000000005px;">General Contractors<br>Inc.</div>
<div class="a td r" style="left:1514.5px;top:1080.56px;width:261.20000000000005px;">$1,950,000.00</div>
<div class="a td r" style="left:2042px;top:1080.56px;width:272.0999999999999px;">$1,950,000.00</div>
<div class="a td r" style="left:2328.1px;top:1080.56px;width:239.9000000000001px;">$182,875.00</div>
<div class="a td r" style="left:2582px;top:1080.56px;width:258px;">$1,767,125.00</div>
<div class="a td" style="left:2867.5px;top:1080.56px;width:195.5px;">Open</div>
<div class="a td" style="left:3076.0px;top:1080.56px;width:182.5px;">Contracts</div>
<div class="a td" style="left:312.5px;top:1155.6299999999999px;width:297px;">038-0200-2022</div>
<div class="a td" style="left:622.5px;top:1155.6299999999999px;width:362px;">East Side Elementary School<br>Portables</div>
<div class="a td" style="left:997.5px;top:1155.6299999999999px;width:237.29999999999995px;">001</div>
<div class="a td" style="left:1247.8px;top:1155.6299999999999px;width:267.20000000000005px;">Precision Craft</div>
<div class="a td r" style="left:1514.5px;top:1155.6299999999999px;width:261.20000000000005px;">$1,500,450.00</div>
<div class="a td r" style="left:2042px;top:1155.6299999999999px;width:272.0999999999999px;">$1,500,450.00</div>
<div class="a td r" style="left:2582px;top:1155.6299999999999px;width:258px;">$1,500,450.00</div>
<div class="a td" style="left:2867.5px;top:1155.6299999999999px;width:195.5px;">Open</div>
<div class="a td" style="left:3076.0px;top:1155.6299999999999px;width:182.5px;">Purchase<br>Orders</div>
<div class="a td" style="left:312.5px;top:1230.6999999999998px;width:297px;">005-2940-2022</div>
<div class="a td" style="left:622.5px;top:1230.6999999999998px;width:362px;">Cheatham Hill Elementary<br>School Outdoor Learning</div>
<div class="a td" style="left:997.5px;top:1230.6999999999998px;width:237.29999999999995px;">305367 VR24-<br>01792</div>
<div class="a td" style="left:1247.8px;top:1230.6999999999998px;width:267.20000000000005px;">Master Crafters</div>
<div class="a td r" style="left:1514.5px;top:1230.6999999999998px;width:261.20000000000005px;">$16,229,732.00</div>
<div class="a td r" style="left:2042px;top:1230.6999999999998px;width:272.0999999999999px;">$16,229,732.00</div>
<div class="a td r" style="left:2328.1px;top:1230.6999999999998px;width:239.9000000000001px;">$15,294,106.00</div>
<div class="a td r" style="left:2582px;top:1230.6999999999998px;width:258px;">$935,626.00</div>
<div class="a td" style="left:2867.5px;top:1230.6999999999998px;width:195.5px;">Open</div>
<div class="a td" style="left:3076.0px;top:1230.6999999999998px;width:182.5px;">Contracts</div>
<div class="a td" style="left:312.5px;top:1305.77px;width:297px;">057-3022-2022</div>
<div class="a td" style="left:622.5px;top:1305.77px;width:362px;">East Cobb Middle School<br>HVAC</div>
<div class="a td" style="left:997.5px;top:1305.77px;width:237.29999999999995px;">VR24-07941</div>
<div class="a td" style="left:1247.8px;top:1305.77px;width:267.20000000000005px;">Build Wise</div>
<div class="a td r" style="left:1514.5px;top:1305.77px;width:261.20000000000005px;">$1,893,632.33</div>
<div class="a td r" style="left:1789.7px;top:1305.77px;width:238.29999999999995px;">$158,765.06</div>
<div class="a td r" style="left:2042px;top:1305.77px;width:272.0999999999999px;">$2,052,397.39</div>
<div class="a td r" style="left:2328.1px;top:1305.77px;width:239.9000000000001px;">$1,501,137.34</div>
<div class="a td r" style="left:2582px;top:1305.77px;width:258px;">$551,260.05</div>
<div class="a td" style="left:2867.5px;top:1305.77px;width:195.5px;">Open</div>
<div class="a td" style="left:3076.0px;top:1305.77px;width:182.5px;">Purchase<br>Orders</div>
<div class="a td" style="left:312.5px;top:1380.84px;width:297px;">001-2949-2022</div>
<div class="a td" style="left:622.5px;top:1380.84px;width:362px;">Austell Elementary School<br>Renovation</div>
<div class="a td" style="left:997.5px;top:1380.84px;width:237.29999999999995px;">006460 VR24-<br>01771</div>
<div class="a td" style="left:1247.8px;top:1380.84px;width:267.20000000000005px;">Noble Construction</div>
<div class="a td r" style="left:1514.5px;top:1380.84px;width:261.20000000000005px;">$101,632.00</div>
<div class="a td r" style="left:1789.7px;top:1380.84px;width:238.29999999999995px;">$26,929,449.00</div>
<div class="a td r" style="left:2042px;top:1380.84px;width:272.0999999999999px;">$27,031,081.00</div>
<div class="a td r" style="left:2328.1px;top:1380.84px;width:239.9000000000001px;">$26,592,727.00</div>
<div class="a td r" style="left:2582px;top:1380.84px;width:258px;">$438,354.00</div>
<div class="a td" style="left:2867.5px;top:1380.84px;width:195.5px;">Open</div>
<div class="a td" style="left:3076.0px;top:1380.84px;width:182.5px;">Contracts</div>
<div class="a td" style="left:312.5px;top:1455.9099999999999px;width:297px;">005-3902-2022</div>
<div class="a td" style="left:622.5px;top:1455.9099999999999px;width:362px;">City View Elementary School<br>New Construction</div>
<div class="a td" style="left:997.5px;top:1455.9099999999999px;width:237.29999999999995px;">VR24-08537</div>
<div class="a td" style="left:1247.8px;top:1455.9099999999999px;width:267.20000000000005px;">Build Wise</div>
<div class="a td r" style="left:1514.5px;top:1455.9099999999999px;width:261.20000000000005px;">$1,622,479.92</div>
<div class="a td r" style="left:2042px;top:1455.9099999999999px;width:272.0999999999999px;">$1,622,479.92</div>
<div class="a td r" style="left:2328.1px;top:1455.9099999999999px;width:239.9000000000001px;">$1,211,050.52</div>
<div class="a td r" style="left:2582px;top:1455.9099999999999px;width:258px;">$411,429.40</div>
<div class="a td" style="left:2867.5px;top:1455.9099999999999px;width:195.5px;">Open</div>
<div class="a td" style="left:3076.0px;top:1455.9099999999999px;width:182.5px;">Purchase<br>Orders</div>
<div class="a td" style="left:312.5px;top:1530.98px;width:297px;">057-3022-2022</div>
<div class="a td" style="left:622.5px;top:1530.98px;width:362px;">East Cobb Middle School<br>HVAC</div>
<div class="a td" style="left:997.5px;top:1530.98px;width:237.29999999999995px;">308720 VR24-<br>01719</div>
<div class="a td" style="left:1247.8px;top:1530.98px;width:267.20000000000005px;">Prime Build</div>
<div class="a td r" style="left:1514.5px;top:1530.98px;width:261.20000000000005px;">$1,118,108.00</div>
<div class="a td r" style="left:2042px;top:1530.98px;width:272.0999999999999px;">$1,118,108.00</div>
<div class="a td r" style="left:2328.1px;top:1530.98px;width:239.9000000000001px;">$717,056.00</div>
<div class="a td r" style="left:2582px;top:1530.98px;width:258px;">$401,052.00</div>
<div class="a td" style="left:2867.5px;top:1530.98px;width:195.5px;">Open</div>
<div class="a td" style="left:3076.0px;top:1530.98px;width:182.5px;">Purchase<br>Orders</div>
<div class="a td" style="left:312.5px;top:1606.05px;width:297px;">005-3029-2022</div>
<div class="a td" style="left:622.5px;top:1606.05px;width:362px;">Chalker Elementary School<br>Roofing</div>
<div class="a td" style="left:997.5px;top:1606.05px;width:237.29999999999995px;">305367 VR24-<br>01792</div>
<div class="a td" style="left:1247.8px;top:1606.05px;width:267.20000000000005px;">Master Crafters</div>
<div class="a td r" style="left:1514.5px;top:1606.05px;width:261.20000000000005px;">$9,696,367.00</div>
<div class="a td r" style="left:2042px;top:1606.05px;width:272.0999999999999px;">$9,696,367.00</div>
<div class="a td r" style="left:2328.1px;top:1606.05px;width:239.9000000000001px;">$9,333,703.00</div>
<div class="a td r" style="left:2582px;top:1606.05px;width:258px;">$362,664.00</div>
<div class="a td" style="left:2867.5px;top:1606.05px;width:195.5px;">Open</div>
<div class="a td" style="left:3076.0px;top:1606.05px;width:182.5px;">Contracts</div>
<div class="a td" style="left:312.5px;top:1681.12px;width:297px;">091-3803-2022</div>
<div class="a td" style="left:622.5px;top:1681.12px;width:362px;">Durham Middle School<br>Roofing</div>
<div class="a td" style="left:997.5px;top:1681.12px;width:237.29999999999995px;">205743 VR24-<br>01862</div>
<div class="a td" style="left:1247.8px;top:1681.12px;width:267.20000000000005px;">Best Practices Co.</div>
<div class="a td r" style="left:1514.5px;top:1681.12px;width:261.20000000000005px;">$1,757,650.00</div>
<div class="a td r" style="left:2042px;top:1681.12px;width:272.0999999999999px;">$1,757,650.00</div>
<div class="a td r" style="left:2328.1px;top:1681.12px;width:239.9000000000001px;">$1,416,297.14</div>
<div class="a td r" style="left:2582px;top:1681.12px;width:258px;">$341,352.86</div>
<div class="a td" style="left:2867.5px;top:1681.12px;width:195.5px;">Open</div>
<div class="a td" style="left:3076.0px;top:1681.12px;width:182.5px;">Purchase<br>Orders</div>
<div class="a td" style="left:312.5px;top:1756.1899999999998px;width:297px;">091-3803-2022</div>
<div class="a td" style="left:622.5px;top:1756.1899999999998px;width:362px;">Durham Middle School<br>Roofing</div>
<div class="a td" style="left:997.5px;top:1756.1899999999998px;width:237.29999999999995px;">205470 VR24-<br>01859</div>
<div class="a td" style="left:1247.8px;top:1756.1899999999998px;width:267.20000000000005px;">Precision Craft</div>
<div class="a td r" style="left:1514.5px;top:1756.1899999999998px;width:261.20000000000005px;">$32,700.00</div>
<div class="a td r" style="left:1789.7px;top:1756.1899999999998px;width:238.29999999999995px;">$752,040.45</div>
<div class="a td r" style="left:2042px;top:1756.1899999999998px;width:272.0999999999999px;">$784,740.45</div>
<div class="a td r" style="left:2328.1px;top:1756.1899999999998px;width:239.9000000000001px;">$453,365.74</div>
<div class="a td r" style="left:2582px;top:1756.1899999999998px;width:258px;">$331,374.71</div>
<div class="a td" style="left:2867.5px;top:1756.1899999999998px;width:195.5px;">Open</div>
<div class="a td" style="left:3076.0px;top:1756.1899999999998px;width:182.5px;">Purchase<br>Orders</div>
<div class="a tt" style="left:312px;top:1827px;width:297px;">Total</div>
<div class="a tt r" style="left:1514.5px;top:1827px;width:261.20000000000005px;">$180,293,400.28</div>
<div class="a tt r" style="left:1789.7px;top:1827px;width:238.29999999999995px;">$241,487,362.86</div>
<div class="a tt r" style="left:2042px;top:1827px;width:272.0999999999999px;">$421,780,763.14</div>
<div class="a tt r" style="left:2328.1px;top:1827px;width:239.9000000000001px;">$313,332,967.65</div>
<div class="a tt r" style="left:2582px;top:1827px;width:258px;">$108,447,795.49</div>
<div class="a " style="left:3285px;top:382px;width:18px;height:1459px;background:#f2f2f2;"></div>
<div class="a " style="left:3285px;top:448px;width:18px;height:47px;background:#cccccc;"></div>
<svg class="a" style="left:3289px;top:405px" width="14" height="17"><path d="M1.5 14.5L8 5L14.5 14.5" fill="none" stroke="#3c3c3c" stroke-width="2.6"/></svg>
<svg class="a" style="left:3289px;top:1801px" width="14" height="17"><path d="M1.5 2.5L8 12L14.5 2.5" fill="none" stroke="#3c3c3c" stroke-width="2.6"/></svg>
<div class="a " style="left:136px;top:1914px;width:3319px;height:70px;background:#f3f2f1;"></div>
<svg class="a" style="left:145px;top:1940px" width="16" height="18"><path d="M13 1V17L2 9Z" fill="#c8c6c4"/></svg>
<svg class="a" style="left:188px;top:1940px" width="16" height="18"><path d="M3 1V17L14 9Z" fill="#c8c6c4"/></svg>
<div class="a " style="left:213.9px;top:1914px;width:2px;height:70px;background:#c8c6c4;"></div>
<div class="a " style="left:368.6px;top:1914px;width:2px;height:70px;background:#c8c6c4;"></div>
<div class="a " style="left:541.6px;top:1914px;width:2px;height:70px;background:#c8c6c4;"></div>
<div class="a " style="left:672.6px;top:1914px;width:2px;height:70px;background:#c8c6c4;"></div>
<div class="a " style="left:865.5px;top:1914px;width:2px;height:70px;background:#c8c6c4;"></div>
<div class="a " style="left:1025px;top:1914px;width:2px;height:70px;background:#c8c6c4;"></div>
<div class="a " style="left:1346px;top:1914px;width:2px;height:70px;background:#c8c6c4;"></div>
<div class="a " style="left:1574.4px;top:1914px;width:2px;height:70px;background:#c8c6c4;"></div>
<div class="a " style="left:1791px;top:1914px;width:2px;height:70px;background:#c8c6c4;"></div>
<div class="a " style="left:1943.3px;top:1914px;width:2px;height:70px;background:#c8c6c4;"></div>
<div class="a tb" style="left:214.9px;top:1934px;width:154.70000000000002px;">Project</div>
<div class="a tb" style="left:369.6px;top:1934px;width:173.0px;">Location</div>
<div class="a tb" style="left:542.6px;top:1934px;width:131.0px;">WBS</div>
<div class="a tb" style="left:673.6px;top:1934px;width:192.89999999999998px;">Deep WBS</div>
<div class="a tb" style="left:866.5px;top:1934px;width:159.5px;">Actuals</div>
<div class="a tb" style="left:1026px;top:1934px;width:321px;">Fiscal Period Payments</div>
<div class="a tb" style="left:1347px;top:1934px;width:228.4000000000001px;">Workflow Log</div>
<div class="a " style="left:1576.4px;top:1913px;width:214.5999999999999px;height:71px;background:#fff;"></div>
<div class="a " style="left:1576.4px;top:1976px;width:214.5999999999999px;height:8px;background:#417766;"></div>
<div class="a tb b" style="left:1575.4px;top:1934px;width:216.5999999999999px;">PO Closeout</div>
<div class="a tb" style="left:1792px;top:1934px;width:152.29999999999995px;">DLOPE</div>
<svg class="a" style="left:160px;top:1998px" width="32" height="50" viewBox="0 0 32 50"><path d="M25.8 7.2C21.5 5 12.5 6 9.3 13.5C6.8 19.5 8 25.5 11.8 30.5C14 33.3 15.4 35 15.8 37.6V42.3Q15.8 43.6 17.3 43.9L18.6 45.6H25.6" fill="none" stroke="#2a8fae" stroke-width="1.7"/><path d="M16 36.6H25.6M16 39.6H25.6M16 42.6H25.6" stroke="#2a8fae" stroke-width="1.6"/><path d="M11.60 15.20L16.80 15.20" stroke="#f0a02a" stroke-width="1.3"/><path d="M12.90 12.95L15.50 17.45" stroke="#f0a02a" stroke-width="1.3"/><path d="M15.50 12.95L12.90 17.45" stroke="#f0a02a" stroke-width="1.3"/><path d="M17.60 13.40L22.80 13.40" stroke="#f0a02a" stroke-width="1.3"/><path d="M18.90 11.15L21.50 15.65" stroke="#f0a02a" stroke-width="1.3"/><path d="M21.50 11.15L18.90 15.65" stroke="#f0a02a" stroke-width="1.3"/><path d="M11.60 21.40L16.80 21.40" stroke="#f0a02a" stroke-width="1.3"/><path d="M12.90 19.15L15.50 23.65" stroke="#f0a02a" stroke-width="1.3"/><path d="M15.50 19.15L12.90 23.65" stroke="#f0a02a" stroke-width="1.3"/><path d="M17.60 23.40L22.80 23.40" stroke="#f0a02a" stroke-width="1.3"/><path d="M18.90 21.15L21.50 25.65" stroke="#f0a02a" stroke-width="1.3"/><path d="M21.50 21.15L18.90 25.65" stroke="#f0a02a" stroke-width="1.3"/><path d="M22.6 16.8V22.5M22.9 19.6L26 16.8M23.2 19.3L26 22.6" stroke="#e0203a" stroke-width="1.3"/></svg>
<div class="a" style="left:188px;top:2004.5px;font:bold 34.5px/40px 'Liberation Sans', sans-serif;color:#072e3b;letter-spacing:0.3px;-webkit-text-stroke:0.9px #072e3b;">EI24</div>
<div class="a ft" style="left:2425px;top:2009px;">DEMO01</div>
<div class="a " style="left:2534px;top:2013px;width:2.2px;height:24px;background:#222;"></div>
<div class="a ft" style="left:2553px;top:2009px;">1.9.47.69</div>
<div class="a " style="left:2669px;top:2013px;width:2.2px;height:24px;background:#222;"></div>
<div class="a ft" style="left:2687px;top:2009px;">Last Login Thursday, September 19, 2024 10:48 AM EST</div>
<div class="a " style="left:3298px;top:2013px;width:2.2px;height:24px;background:#222;"></div>
<svg class="a" style="left:3339px;top:2004px" width="34" height="36" viewBox="0 0 34 36"><rect x="3.45" y="6.55" width="27" height="26.7" rx="2.5" fill="none" stroke="#15191c" stroke-width="3.1"/><rect x="9.1" y="7" width="15.9" height="2.9" fill="#15191c"/><circle cx="16.9" cy="6.2" r="4.5" fill="#15191c"/><circle cx="16.9" cy="6.2" r="1.7" fill="#e6e6e6"/><path d="M4.5 23.5H9.8L14.3 14.8L16.1 27.2L21.1 19.6L24.6 23.5H30" fill="none" stroke="#15191c" stroke-width="2.6" stroke-linejoin="bevel"/></svg>
</body></html>
